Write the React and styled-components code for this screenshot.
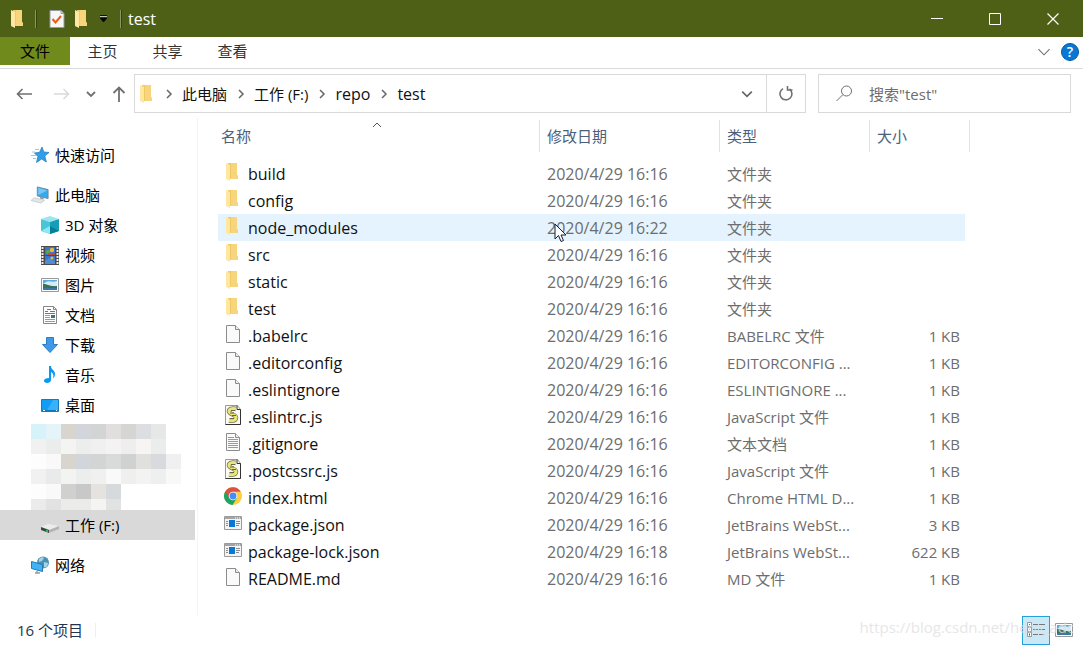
import React, { useState } from "react";
import styled, { createGlobalStyle } from "styled-components";

const files = [
  { name: "build", date: "2020/4/29 16:16", type: "文件夹", icon: "folder" },
  { name: "config", date: "2020/4/29 16:16", type: "文件夹", icon: "folder" },
  { name: "node_modules", date: "2020/4/29 16:22", type: "文件夹", icon: "folder" },
  { name: "src", date: "2020/4/29 16:16", type: "文件夹", icon: "folder" },
  { name: "static", date: "2020/4/29 16:16", type: "文件夹", icon: "folder" },
  { name: "test", date: "2020/4/29 16:16", type: "文件夹", icon: "folder" },
  { name: ".babelrc", date: "2020/4/29 16:16", type: "BABELRC 文件", size: "1 KB", icon: "file" },
  { name: ".editorconfig", date: "2020/4/29 16:16", type: "EDITORCONFIG ...", size: "1 KB", icon: "file" },
  { name: ".eslintignore", date: "2020/4/29 16:16", type: "ESLINTIGNORE ...", size: "1 KB", icon: "file" },
  { name: ".eslintrc.js", date: "2020/4/29 16:16", type: "JavaScript 文件", size: "1 KB", icon: "script" },
  { name: ".gitignore", date: "2020/4/29 16:16", type: "文本文档", size: "1 KB", icon: "text" },
  { name: ".postcssrc.js", date: "2020/4/29 16:16", type: "JavaScript 文件", size: "1 KB", icon: "script" },
  { name: "index.html", date: "2020/4/29 16:16", type: "Chrome HTML D...", size: "1 KB", icon: "chrome" },
  { name: "package.json", date: "2020/4/29 16:16", type: "JetBrains WebSt...", size: "3 KB", icon: "app" },
  { name: "package-lock.json", date: "2020/4/29 16:18", type: "JetBrains WebSt...", size: "622 KB", icon: "app" },
  { name: "README.md", date: "2020/4/29 16:16", type: "MD 文件", size: "1 KB", icon: "file" },
];

const places = [
  { name: "3D 对象", icon: "cube" },
  { name: "视频", icon: "video" },
  { name: "图片", icon: "picture" },
  { name: "文档", icon: "document" },
  { name: "下载", icon: "download" },
  { name: "音乐", icon: "music" },
  { name: "桌面", icon: "desktop" },
];

const mosaic = [
  ["#d8f2fa", "#e4f4f9", "#d8d4ce", "#d2d6da", "#d3d5d5", "#e0dfde", "#d5d5d4", "#dcdee1", "#e6e8e8"],
  ["#f1f1f1", "#ebedec", "#f4f4f2", "#eceeee", "#f0f0f0", "#f3f3f3", "#eeeeee", "#f6f5f4", "#ebedec"],
  ["#fdfdfd", "#f9f9f9", "#d8d4ce", "#d2d6da", "#d3d5d5", "#d9dada", "#d0d2d1", "#e0e0de", "#d8dadd", "#f0f0f0"],
  ["#f1f1f1", "#e9ebea", "#f3f3f1", "#eceeee", "#f0f0f0", "#f9f9f9", "#efefed", "#f3f3f3", "#eef0ef", "#f8f8f8"],
  ["#fdfdfd", "#f9f9f9", "#d0d0cf", "#c8c8c8", "#e5e3df", "#d6dadd"],
  ["#ebebeb", "#e2e2e2", "#eaebea", "#ebebe9", "#f4f4f2", "#e1e3e2"],
];

const Icon = ({ name }) => {
  switch (name) {
    case "folder":
      return (
        <svg width="18" height="18" viewBox="0 0 18 18">
          <path d="M4 0h9v12l1 1v3H4z" fill="#f0c864" />
          <path d="M7 0h6v12l1 1v3H7z" fill="#f7d57d" />
          <path d="M2 0l4 2v16l-4-2z" fill="#ffe7a2" />
        </svg>
      );
    case "file":
    case "text":
      return (
        <svg width="18" height="18" viewBox="0 0 18 18">
          <path d="M2.500 .5h9l4 4v13h-13z" fill="#fafafa" stroke="#8c8c8c" />
          <path d="M11.500 .5v4h4" fill="#eee" stroke="#8c8c8c" />
          {name === "text" && (
            <path d="M4 4.500h6M4 6.500h10M4 8.500h10M4 10.500h10M4 12.500h10M4 14.500h10" stroke="#9a9a9a" />
          )}
        </svg>
      );
    case "script":
      return (
        <svg width="18" height="20" viewBox="0 0 18 20">
          <path d="M1.500 .5h12l3 4v15h-15z" fill="#fbfbf4" stroke="#999" />
          <path d="M13 .5v4h3.500v15h-15" fill="none" stroke="#333" />
          <path d="M12 4C8 3 5 4 5 6.500s7 3 7 6-3 3.500-7 3" fill="none" stroke="#77745a" strokeWidth="4.500" />
          <path d="M12 4C8 3 5 4 5 6.500s7 3 7 6-3 3.500-7 3" fill="none" stroke="#eae678" strokeWidth="3" />
          <path d="M7 5.500h4M6 8h4M8 10.500h4M6 13.500h4" stroke="#66644d" />
        </svg>
      );
    case "chrome":
      return (
        <svg width="18" height="18" viewBox="0 0 18 18">
          <circle cx="9" cy="9" r="9" fill="#ffcd40" />
          <path d="M9 9L1.200 4.500A9 9 0 0 0 8.500 18L13 11z" fill="#1da362" />
          <path d="M1.200 4.500A9 9 0 0 1 16.800 4.800H9a4.200 4.200 0 0 0-4 5.500z" fill="#dd5144" />
          <circle cx="9" cy="9" r="4.300" fill="#f4f4f4" />
          <circle cx="9" cy="9" r="3.400" fill="#4c8bf5" />
        </svg>
      );
    case "app":
      return (
        <svg width="18" height="18" viewBox="0 0 18 18">
          <path d="M.5 2.500h17v13H.5z" fill="#f4f4f4" stroke="#9a9a9a" />
          <path d="M1 3h16v2H1z" fill="#a5a5a5" />
          <path d="M11 4h1M13 4h1M15 4h1" stroke="#fff" />
          <path d="M5 6h6v7H5z" fill="#0878d8" />
          <path d="M2 7.500h2M2 9.500h2M2 11.500h2M12 7.500h4M12 9.500h4M12 11.500h3" stroke="#8b8b8b" />
        </svg>
      );
    case "star":
      return (
        <svg width="18" height="18" viewBox="0 0 18 18">
          <path d="M11 1l1.800 5 5.200.5-4.200 3.500 1.600 6L10.600 13 5.500 16.500l1.400-6L3.500 7l5-.7z" fill="#319fe8" stroke="#1778bd" strokeWidth=".7" />
          <path d="M4 3.500h4M1 6h3M0 9.500h5M2 12.500h3" stroke="#7dbbe0" strokeWidth=".8" />
        </svg>
      );
    case "pc":
      return (
        <svg width="18" height="18" viewBox="0 0 20 18">
          <path d="M7 0l12 3v10L7 10z" fill="#36a8ee" stroke="#718594" />
          <path d="M8 1l10 3-10 5z" fill="#74c7f7" />
          <path d="M10 11l4 1v2l-4-1z" fill="#8b959d" />
          <path d="M0 15l4-3 11 3-4 3z" fill="#e3e7ea" stroke="#b5bdc4" strokeWidth=".7" />
        </svg>
      );
    case "cube":
      return (
        <svg width="18" height="18" viewBox="0 0 18 18">
          <path d="M9 0l9 3-9 3-9-3z" fill="#9be6ee" />
          <path d="M0 3l9 3v12l-9-3z" fill="#48c6d7" />
          <path d="M18 3L9 6v12l9-3z" fill="#169db8" />
          <path d="M0 15l9-5v8z" fill="#8de9ee" />
          <path d="M9 18v-8l9 5z" fill="#087e9d" />
        </svg>
      );
    case "video":
      return (
        <svg width="18" height="19" viewBox="0 0 18 19">
          <path d="M0 0h18v19H0z" fill="#4b4b4b" />
          <path d="M1.500 1v17M16.500 1v17" stroke="#eee" strokeWidth="2" strokeDasharray="2 1" />
          <path d="M4 1h10v8H4zM4 10h10v8H4z" fill="#3974cf" />
          <circle cx="7" cy="6" r="2.200" fill="#54a45e" />
          <circle cx="11" cy="4" r="2.200" fill="#edb93e" />
          <path d="M7 7h7v2H7z" fill="#bd4c38" />
          <path d="M4 15l4-3 6 3v3H4z" fill="#508bd6" />
          <circle cx="11" cy="12" r="1.500" fill="#edb93e" />
        </svg>
      );
    case "picture":
      return (
        <svg width="18" height="18" viewBox="0 0 18 18">
          <path d="M.5 2.500h17v13H.5z" fill="#fff" stroke="#999" />
          <path d="M2 4h14v10H2z" fill="#5ca9e4" />
          <path d="M5 6c3-2 6 1 11-1v5H2V8z" fill="#d6ecf7" />
          <path d="M2 8c5 0 7 3 14 2v2H2z" fill="#3b7154" />
          <path d="M2 12h14v2H2z" fill="#3e77a4" />
        </svg>
      );
    case "document":
      return (
        <svg width="18" height="18" viewBox="0 0 18 18">
          <path d="M2.500 .5h10l3 3v14h-13z" fill="#fff" stroke="#888" />
          <path d="M12.500 .5v3h3" fill="none" stroke="#888" />
          <path d="M4 5.500h3M6 3.500h4M9 5.500h5M4 7.500h10" stroke="#318ac2" />
          <path d="M4 9.500h5M4 11.500h5M4 13.500h10M4 15.500h10" stroke="#999" />
          <path d="M10 9h4v3h-4z" fill="#3c7488" />
        </svg>
      );
    case "download":
      return (
        <svg width="18" height="18" viewBox="0 0 18 18">
          <path d="M5.500 1.500h7v7h4L9 16.500 1.500 8.500h4z" fill="#4099e8" stroke="#287dc7" />
        </svg>
      );
    case "music":
      return (
        <svg width="18" height="18" viewBox="0 0 18 18">
          <path d="M8 0h2c0 4 4 4 4 8 0 2-1 4-2 4 1-3 0-5-2-6v8c0 2-2 3-4 3s-3-1-3-2.500C3 13 5 12 8 12z" fill="#079af3" />
        </svg>
      );
    case "desktop":
      return (
        <svg width="18" height="18" viewBox="0 0 18 18">
          <path d="M.5 3.500h17v12H.5z" fill="#119cf5" stroke="#187ab8" />
          <path d="M12 4h5v10H6z" fill="#38b0fa" />
          <path d="M1 14.500h16" stroke="#0878bd" />
          <path d="M2 14.500h2M15 14.500h1" stroke="#fff" />
        </svg>
      );
    case "drive":
      return (
        <svg width="18" height="18" viewBox="0 0 18 18">
          <path d="M0 11l7-3 11 2-7 4z" fill="#ececee" />
          <path d="M0 11l8 3v3l-8-3z" fill="#3f4543" />
          <path d="M8 14l10-4v3L8 17z" fill="#b3b3b5" />
          <path d="M5 14.500l2 1" stroke="#28dd55" strokeWidth="1.500" />
        </svg>
      );
    case "network":
      return (
        <svg width="18" height="18" viewBox="0 0 18 18">
          <circle cx="12" cy="6.500" r="6" fill="#4c91b5" />
          <path d="M8 3c2-2 4-2 5-1l-2 3-3 1zM13 6l4 1c0 3-2 5-4 4z" fill="#a8d4df" />
          <path d="M.5 5.500l11 3v7l-11-3z" fill="#40b2f5" stroke="#247bae" />
          <path d="M6 15v2M4 17h5" stroke="#929da5" strokeWidth="1.500" />
        </svg>
      );
    default:
      return null;
  }
};

const Chevron = ({ up, right, size = 10, width = 1 }) => (
  <svg width={size} height={size} viewBox="0 0 10 10" fill="none" stroke="currentColor" strokeWidth={width}>
    <path d={right ? "M3 1l4 4-4 4" : up ? "M1 7l4-4 4 4" : "M1 3l4 4 4-4"} />
  </svg>
);

const App = () => {
  const [search, setSearch] = useState("");

  return (
    <Window>
      <GlobalStyle />
      <TitleBar>
        <QuickTools>
          <Icon name="folder" />
          <Divider />
          <ToolButton aria-label="属性">
            <svg width="16" height="18" viewBox="0 0 16 18">
              <path d="M1 .5h11l3 3v14H1z" fill="#f7f7f7" stroke="#929aa5" />
              <path d="M12 .5v3h3" fill="none" stroke="#929aa5" />
              <path d="M3.500 9l3 3.500L12 6" fill="none" stroke="#ed5b16" strokeWidth="2" />
            </svg>
          </ToolButton>
          <ToolButton aria-label="新建文件夹">
            <Icon name="folder" />
          </ToolButton>
          <ToolButton aria-label="自定义快速访问工具栏">
            <svg width="9" height="8" viewBox="0 0 9 8">
              <path d="M1 .5h7" stroke="#111" />
              <path d="M1 1.500h7" stroke="#c5cbb2" />
              <path d="M1 3h7L4.500 7z" fill="#000" stroke="#111" />
            </svg>
          </ToolButton>
          <Divider />
        </QuickTools>
        <Title>test</Title>
        <Caption aria-label="最小化">
          <svg width="12" height="12"><path d="M0 5.500h12" stroke="#fff" /></svg>
        </Caption>
        <Caption aria-label="最大化">
          <svg width="12" height="12"><path d="M.5 .5h11v11H.5z" fill="none" stroke="#fff" /></svg>
        </Caption>
        <Caption aria-label="关闭">
          <svg width="12" height="12"><path d="M.5 .5l11 11M11.500 .5L.5 11.500" stroke="#fff" strokeWidth="1.200" /></svg>
        </Caption>
      </TitleBar>

      <Ribbon>
        <FileTab>文件</FileTab>
        <Tab>主页</Tab>
        <Tab>共享</Tab>
        <Tab>查看</Tab>
        <RibbonEnd>
          <PlainButton aria-label="展开功能区"><Chevron size={14} width={0.8} /></PlainButton>
          <Help aria-label="帮助">?</Help>
        </RibbonEnd>
      </Ribbon>

      <NavBar>
        <NavButtons>
          <PlainButton aria-label="后退">
            <svg width="16" height="14" viewBox="0 0 16 14" fill="none" stroke="#707070" strokeWidth="1.600"><path d="M6.500 2L1.500 7l5 5M2 7h14" /></svg>
          </PlainButton>
          <ForwardButton aria-label="前进" disabled>
            <svg width="16" height="14" viewBox="0 0 16 14" fill="none" stroke="#d9d9d9" strokeWidth="1.400"><path d="M9.500 2l5 5-5 5M0 7h14" /></svg>
          </ForwardButton>
          <PlainButton aria-label="最近浏览的位置"><Chevron width={1.8} /></PlainButton>
          <PlainButton aria-label="上移">
            <svg width="14" height="16" viewBox="0 0 14 16" fill="none" stroke="#707070" strokeWidth="1.800"><path d="M1.500 7L7 1.500 12.500 7M7 2v14" /></svg>
          </PlainButton>
        </NavButtons>
        <AddressBar>
          <Crumbs>
            <Icon name="folder" />
            <Chevron right width={1.5} />
            <Crumb>此电脑</Crumb>
            <Chevron right width={1.5} />
            <Crumb>工作 (F:)</Crumb>
            <Chevron right width={1.5} />
            <Crumb $latin>repo</Crumb>
            <Chevron right width={1.5} />
            <Crumb $latin>test</Crumb>
          </Crumbs>
          <AddressButton aria-label="以前的位置"><Chevron size={12} width={1.4} /></AddressButton>
          <AddressButton $line aria-label="刷新">
            <svg width="16" height="16" viewBox="0 0 16 16" fill="none" stroke="#707070" strokeWidth="1.600">
              <path d="M4.500 3A6 6 0 1 0 11 2.600M6.500 0v4h-5" transform="matrix(-1 0 0 1 16 0)" />
            </svg>
          </AddressButton>
        </AddressBar>
        <SearchBox>
          <svg width="17" height="17" viewBox="0 0 17 17" fill="none" stroke="#707070">
            <circle cx="10.500" cy="6" r="5" />
            <path d="M7 9.500L.5 16" />
          </svg>
          <input
            type="text"
            aria-label="搜索"
            placeholder={'搜索"test"'}
            value={search}
            onChange={(e) => setSearch(e.target.value)}
          />
        </SearchBox>
      </NavBar>

      <Content>
        <Sidebar>
          <Place href="#quick"><Icon name="star" />快速访问</Place>
          <Group>
            <Place href="#pc"><Icon name="pc" />此电脑</Place>
            {places.map((place) => (
              <Place key={place.name} href={`#${place.icon}`} $nested>
                <Icon name={place.icon} />
                {place.name}
              </Place>
            ))}
            <Mosaic>
              {mosaic.map((row, y) => (
                <MosaicRow key={y}>
                  {row.map((color, x) => <Tile key={x} $color={color} />)}
                </MosaicRow>
              ))}
            </Mosaic>
            <Place href="#work" $nested $active><Icon name="drive" />工作 (F:)</Place>
          </Group>
          <Place href="#network"><Icon name="network" />网络</Place>
        </Sidebar>

        <Main>
          <FileTable>
            <colgroup>
              <NameCol />
              <DateCol />
              <TypeCol />
              <SizeCol />
              <EndCol />
            </colgroup>
            <thead>
              <tr>
                <HeadCell>
                  名称
                  <SortMark><Chevron up /></SortMark>
                </HeadCell>
                <HeadCell>修改日期</HeadCell>
                <HeadCell>类型</HeadCell>
                <HeadCell colSpan="2">大小</HeadCell>
              </tr>
            </thead>
            <tbody>
              {files.map((file) => {
                const hovered = file.name === "node_modules";
                return (
                  <Row key={file.name} $hovered={hovered}>
                    <NameCell>
                      <FileName>
                        <Icon name={file.icon} />
                        {file.name}
                      </FileName>
                    </NameCell>
                    <DateCell>
                      {file.date}
                      {hovered && (
                        <Pointer width="13" height="20" viewBox="0 0 13 20">
                          <path d="M1 1v15l3.500-3.500L7 18.500l2.500-1L7 12h5z" fill="#fff" stroke="#151c2b" />
                        </Pointer>
                      )}
                    </DateCell>
                    <Cell>{file.type}</Cell>
                    <Cell $right>{file.size}</Cell>
                  </Row>
                );
              })}
            </tbody>
          </FileTable>
        </Main>
      </Content>

      <StatusBar>
        <Count>16 个项目</Count>
        <ViewSwitch>
          <ViewButton $active aria-label="详细信息">
            <svg width="18" height="18" viewBox="0 0 18 18">
              <path d="M.5 1.500h4v4h-4zM.5 6.500h4v4h-4zM.5 11.500h4v4h-4z" fill="#fff" stroke="#999" />
              <path d="M2 3.500h1" stroke="#3778bd" />
              <path d="M2 8.500h1" stroke="#b9853c" />
              <path d="M2 13.500h1" stroke="#c22" strokeWidth="2" />
              <path d="M6 3.500h5M12 3.500h6M6 8.500h5M12 8.500h6M6 13.500h5M12 13.500h6" stroke="#777" />
            </svg>
          </ViewButton>
          <ViewButton aria-label="大缩略图"><Icon name="picture" /></ViewButton>
        </ViewSwitch>
        <Watermark>https://blog.csdn.net/hero_adc</Watermark>
      </StatusBar>
    </Window>
  );
};

const GlobalStyle = createGlobalStyle`
  * {
    box-sizing: border-box;
  }
  body {
    margin: 0;
    background: #fff;
    color: #111;
    font: 15px/20px "Open Sans", "Noto Sans CJK SC", sans-serif;
  }
  button, input {
    font: inherit;
    color: inherit;
  }
  button {
    border: none;
    padding: 0;
    background: none;
  }
  svg {
    flex-shrink: 0;
  }
`;

const Window = styled.div`
  display: flex;
  flex-direction: column;
  min-height: 100vh;
`;
const TitleBar = styled.header`
  display: flex;
  align-items: center;
  height: 37px;
  padding-right: 1px;
  background: #4e6015;
  color: #fff;
`;
const QuickTools = styled.div`
  display: flex;
  align-items: center;
  gap: 8px;
  padding-left: 9px;
`;
const ToolButton = styled.button`
  display: flex;
`;
const Divider = styled.span`
  width: 2px;
  height: 18px;
  margin-right: 4px;
  border-left: 1px solid #8b966a;
  border-right: 1px solid #35420c;
  ${ToolButton} + & {
    margin-left: 4px;
  }
`;
const Title = styled.span`
  flex: 1;
  padding-left: 2px;
  font-size: 16px;
`;
const Caption = styled.button`
  display: flex;
  align-items: center;
  justify-content: center;
  width: 58px;
  height: 36px;
`;
const Ribbon = styled.nav`
  display: flex;
  height: 32px;
  border-bottom: 1px solid #dadbdc;
`;
const Tab = styled.button`
  width: 65px;
  height: 28px;
  color: #333;
`;
const FileTab = styled(Tab)`
  width: 70px;
  background: #708a1b;
  color: #000;
`;
const RibbonEnd = styled.div`
  display: flex;
  align-items: center;
  gap: 10px;
  height: 30px;
  margin-left: auto;
  padding-right: 4px;
  color: #888;
`;
const PlainButton = styled.button`
  display: flex;
  align-items: center;
  color: #707070;
`;
const ForwardButton = styled(PlainButton)`
  margin-left: 6px;
`;
const Help = styled.button`
  width: 18px;
  height: 18px;
  border-radius: 50%;
  background: #0877d5;
  border: 1px solid #075b9f;
  color: #fff;
  font-size: 14px;
  font-weight: 600;
  line-height: 16px;
`;
const NavBar = styled.div`
  display: flex;
  padding: 5px 12px 5px 16px;
`;
const NavButtons = styled.div`
  display: flex;
  align-items: center;
  gap: 16px;
  width: 118px;
`;
const AddressBar = styled.div`
  display: flex;
  flex: 1;
  height: 39px;
  border: 1px solid #d9d9d9;
`;
const Crumbs = styled.div`
  display: flex;
  align-items: center;
  flex: 1;
  gap: 8px;
  padding-left: 3px;
  color: #666;
`;
const Crumb = styled.button`
  padding-right: 1px;
  color: #111;
  font-size: ${(props) => (props.$latin ? 16 : 15)}px;
`;
const AddressButton = styled.button`
  display: flex;
  align-items: center;
  justify-content: center;
  width: 39px;
  color: #666;
  border-left: ${(props) => (props.$line ? "1px solid #d9d9d9" : "none")};
`;
const SearchBox = styled.label`
  display: flex;
  align-items: center;
  gap: 16px;
  width: 253px;
  margin-left: 12px;
  padding-left: 17px;
  border: 1px solid #d9d9d9;
  input {
    flex: 1;
    min-width: 0;
    padding: 0;
    border: none;
    outline: none;
  }
  input::placeholder {
    color: #6d6d6d;
  }
`;
const Content = styled.div`
  display: flex;
  flex: 1;
`;
const Sidebar = styled.aside`
  width: 198px;
  padding: 22px 2px 0 0;
  border-right: 1px solid #f4f4f4;
`;
const Group = styled.div`
  padding: 10px 0;
`;
const Place = styled.a`
  display: flex;
  align-items: center;
  gap: 6px;
  height: 30px;
  padding-left: ${(props) => (props.$nested ? 41 : 31)}px;
  background: ${(props) => (props.$active ? "#d9d9d9" : "transparent")};
  color: #000;
  text-decoration: none;
`;
const Mosaic = styled.div`
  height: 90px;
  overflow: hidden;
  padding: 4px 0 0 31px;
`;
const MosaicRow = styled.div`
  display: flex;
`;
const Tile = styled.span`
  width: 15px;
  height: 15px;
  background: ${(props) => props.$color};
`;
const Main = styled.main`
  flex: 1;
  padding: 2px 0 0 20px;
`;
const FileTable = styled.table`
  width: 752px;
  table-layout: fixed;
  border-collapse: separate;
  border-spacing: 0;
`;
const NameCol = styled.col`
  width: 322px;
`;
const DateCol = styled.col`
  width: 180px;
`;
const TypeCol = styled.col`
  width: 150px;
`;
const SizeCol = styled.col`
  width: 95px;
`;
const EndCol = styled.col`
  width: 5px;
`;
const HeadCell = styled.th`
  position: relative;
  height: 32px;
  padding: 0 0 0 7px;
  border-right: 1px solid #e2e2e2;
  color: #4c607a;
  font-weight: 400;
  text-align: left;
  &:first-child {
    padding-left: 3px;
  }
`;
const SortMark = styled.span`
  position: absolute;
  top: 0;
  left: 0;
  right: 4px;
  display: flex;
  justify-content: center;
  color: #555;
`;
const Cell = styled.td`
  position: relative;
  height: 27px;
  padding: 0 5px 0 7px;
  color: #6d6d6d;
  text-align: ${(props) => (props.$right ? "right" : "left")};
  white-space: nowrap;
`;
const Row = styled.tr`
  ${Cell} {
    background: ${(props) => (props.$hovered ? "#e5f3ff" : "transparent")};
  }
  &:first-child ${Cell} {
    border-top: 8px solid transparent;
    height: 35px;
  }
`;
const NameCell = styled(Cell)`
  padding-left: 6px;
  color: #111;
  font-size: 16px;
`;
const DateCell = styled(Cell)`
  font-size: 16px;
`;
const FileName = styled.span`
  display: flex;
  align-items: center;
  gap: 6px;
  svg {
    margin-bottom: 3px;
  }
`;
const Pointer = styled.svg`
  position: absolute;
  left: 14px;
  top: 9px;
`;
const StatusBar = styled.footer`
  position: relative;
  display: flex;
  align-items: center;
  justify-content: space-between;
  height: 30px;
  padding: 0 5px 0 17px;
  color: #24364f;
`;
const Count = styled.span`
  padding-right: 12px;
  border-right: 1px solid #eee;
  line-height: 14px;
`;
const ViewSwitch = styled.div`
  display: flex;
`;
const ViewButton = styled.button`
  display: flex;
  align-items: center;
  justify-content: center;
  width: 28px;
  height: 29px;
  border: 1px solid ${(props) => (props.$active ? "#26a0da" : "transparent")};
  background: ${(props) => (props.$active ? "#cbe8f6" : "transparent")};
`;
const Watermark = styled.span`
  position: absolute;
  right: 9px;
  top: 2px;
  color: #e0e0e0cc;
  pointer-events: none;
`;

export default App;
